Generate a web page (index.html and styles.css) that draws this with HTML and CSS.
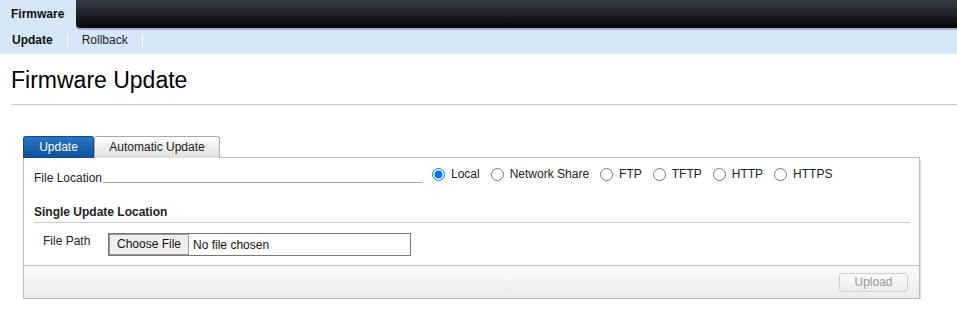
FILE: index.html
```html
<!DOCTYPE html>
<html>
<head>
<meta charset="utf-8" />
<title>Firmware Update</title>
<link rel="stylesheet" href="styles.css">
</head>
<body>
<div class="topbar">
  <div class="toptab">Firmware</div>
  <div class="darkbar"></div>
</div>
<div class="subnav">
  <a class="active">Update</a><span class="sep"></span>
  <a>Rollback</a><span class="sep"></span>
</div>

<h1>Firmware Update</h1>

<div class="tabs">
  <div class="tab selected">Update</div>
  <div class="tab">Automatic Update</div>
  <div class="tabline"></div>
</div>
<div class="panel">
  <div class="panel-body">
    <div class="row location">
      <label class="dotted"><span>File Location</span></label>
      <div class="radios">
        <label><input type="radio" name="loc" checked> Local</label>
        <label><input type="radio" name="loc"> Network Share</label>
        <label><input type="radio" name="loc"> FTP</label>
        <label><input type="radio" name="loc"> TFTP</label>
        <label><input type="radio" name="loc"> HTTP</label>
        <label><input type="radio" name="loc"> HTTPS</label>
      </div>
    </div>
    <h3>Single Update Location</h3>
    <div class="row path">
      <label>File Path</label>
      <div class="file"><span class="choose">Choose File</span><span>No file chosen</span></div>
    </div>
  </div>
  <div class="panel-foot">
    <button disabled>Upload</button>
  </div>
</div>
</body>
</html>
```
FILE: styles.css
```css
* {
  font-family: 'Liberation Sans', Arial, sans-serif;
  box-sizing: border-box;
}
html, body {
  margin: 0;
  background: #fff;
  color: #222;
  font-size: 12px;
}
.topbar {
  display: flex;
  height: 30px;
  background: #d5e6f7;
}
.toptab {
  width: 76px;
  padding: 7px 0 0 11px;
  font-weight: bold;
  color: #111;
}
.darkbar {
  flex: 1;
  height: 28px;
  border-bottom-left-radius: 4px;
  background: linear-gradient(#363a45, #1d1f24 55%, #050607);
  box-shadow: 0 2px 0 #9fb4c8;
}
.subnav {
  display: flex;
  align-items: center;
  height: 24px;
  padding: 0 0 4px 12px;
  background: #d5e6f7;
}
.subnav a {
  color: #222;
}
.subnav a.active {
  font-weight: bold;
  color: #111;
}
.sep {
  width: 1px;
  height: 13px;
  background: #fff;
  margin: 0 14px;
}
h1 {
  margin: 12px 0 0 11px;
  padding-bottom: 10px;
  border-bottom: 1px solid #ccc;
  font-size: 23px;
  font-weight: normal;
  color: #000;
  line-height: 28px;
}
.tabs {
  display: flex;
  align-items: flex-end;
  margin: 31px 0 0 23px;
  width: 897px;
  height: 22px;
}
.tab {
  height: 22px;
  padding: 3px 0 0;
  text-align: center;
  border: 1px solid #aaa;
  border-bottom: 0;
  border-radius: 3px 3px 0 0;
  background: linear-gradient(#fdfdfd, #dedede);
  color: #222;
  width: 126px;
}
.tab.selected {
  width: 71px;
  border-color: #0b4a8e;
  background: linear-gradient(#2b75c2, #0b4f97);
  color: #fff;
}
.tabline {
  flex: 1;
  border-top: 1px solid #bbb;
  border-right: 1px solid #bbb;
  border-radius: 0 3px 0 0;
  height: 1px;
}
.panel {
  margin-left: 23px;
  width: 897px;
  border: 1px solid #bbb;
  border-top: 0;
  box-shadow: 1px 2px 1px #ddd;
}
.panel-body {
  padding: 7px 9px 10px 9px;
  height: 107px;
}
.row {
  display: flex;
}
.location {
  height: 30px;
}
.dotted {
  width: 389px;
  height: 18px;
  padding-top: 6px;
  margin-left: 1px;
  background-image: linear-gradient(#aaa, #aaa);
  background-size: 100% 1px;
  background-position: 0 17px;
  background-repeat: no-repeat;
}
.dotted span {
  display: inline-block;
  background: #fff;
  padding-right: 1px;
  line-height: 13px;
}
.radios {
  display: flex;
  margin-left: 9px;
}
.radios label {
  display: flex;
  align-items: center;
  height: 18px;
  margin-right: 11px;
  color: #222;
}
.radios input {
  margin: 0 6px 0 0;
  width: 13px;
  height: 13px;
}
h3 {
  margin: 10px 0 0 1px;
  padding-bottom: 3px;
  border-bottom: 1px solid #ccc;
  font-size: 12px;
  font-weight: bold;
  color: #222;
}
.path {
  margin-top: 10px;
  padding-left: 10px;
}
.path label {
  width: 65px;
  padding-top: 1px;
}
.file {
  display: flex;
  align-items: center;
  width: 303px;
  height: 23px;
  border: 1px solid #777;
  font-size: 12px;
  color: #111;
}
.choose {
  height: 21px;
  line-height: 19px;
  padding: 0 7px;
  margin-right: 4px;
  border: 1px solid #999;
  background: #efefef;
}
.panel-foot {
  height: 33px;
  border-top: 1px solid #bbb;
  background: linear-gradient(#fafafa, #ececec);
  display: flex;
  justify-content: flex-end;
  align-items: center;
  padding-right: 11px;
}
.panel-foot button {
  width: 69px;
  height: 19px;
  border: 1px solid #ccc;
  border-radius: 3px;
  background: linear-gradient(#fafafa, #ececec);
  color: #999;
  font-size: 12px;
}
```
